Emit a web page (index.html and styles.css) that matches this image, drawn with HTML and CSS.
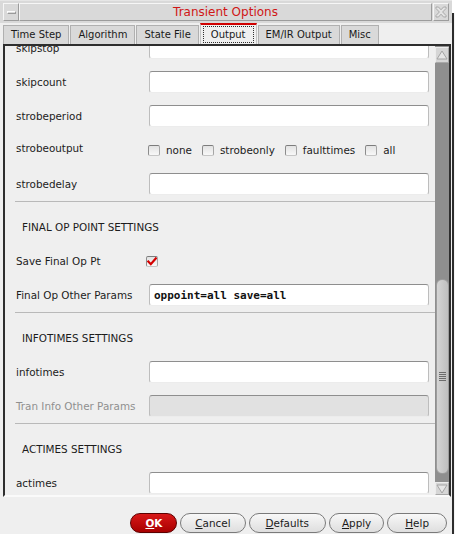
FILE: index.html
```html
<!DOCTYPE html>
<html>
<head>
<meta charset="utf-8">
<title>Transient Options</title>
<link rel="stylesheet" href="styles.css">
</head>
<body>
<div class="window">
  <div class="titlebar">
    <div class="tb-btn"><span class="dash"></span></div>
    <div class="title">Transient Options</div>
    <div class="tb-btn close">
      <svg width="12" height="12" viewBox="0 0 12 12"><polygon points="1,1 3.5,1 6,3.8 8.5,1 11,1 11,2.5 7.6,6 11,9.5 11,11 8.5,11 6,8.2 3.5,11 1,11 1,9.5 4.4,6 1,2.5" fill="#e4e4e4" stroke="#a9a9a9" stroke-width="1"/></svg>
    </div>
  </div>

  <div class="tabs">
    <div class="tab">Time Step</div>
    <div class="tab">Algorithm</div>
    <div class="tab">State File</div>
    <div class="tab active"><span class="focus">Output</span></div>
    <div class="tab">EM/IR Output</div>
    <div class="tab">Misc</div>
  </div>

  <div class="panel">
    <div class="viewport">
      <div class="content">
        <div class="row"><span class="label">skipstop</span><span class="field"></span></div>
        <div class="row"><span class="label">skipcount</span><span class="field"></span></div>
        <div class="row"><span class="label">strobeperiod</span><span class="field"></span></div>
        <div class="row row-top">
          <span class="label">strobeoutput</span>
          <div class="checks">
            <span class="check"><span class="cb"></span>none</span>
            <span class="check"><span class="cb"></span>strobeonly</span>
            <span class="check"><span class="cb"></span>faulttimes</span>
            <span class="check"><span class="cb"></span>all</span>
          </div>
        </div>
        <div class="row"><span class="label">strobedelay</span><span class="field"></span></div>

        <div class="section">
          <div class="heading">FINAL OP POINT SETTINGS</div>
          <div class="row"><span class="label">Save Final Op Pt</span>
            <span class="cb checked"><svg width="10" height="9" viewBox="0 0 10 9"><path d="M1.3 4.6 L3.8 7.2 L8.8 1.4" fill="none" stroke="#d40000" stroke-width="2.2" stroke-linecap="square"/></svg></span>
          </div>
          <div class="row"><span class="label">Final Op Other Params</span><span class="field mono">oppoint=all save=all</span></div>
        </div>

        <div class="section">
          <div class="heading">INFOTIMES SETTINGS</div>
          <div class="row"><span class="label">infotimes</span><span class="field"></span></div>
          <div class="row"><span class="label disabled">Tran Info Other Params</span><span class="field off"></span></div>
        </div>

        <div class="section">
          <div class="heading">ACTIMES SETTINGS</div>
          <div class="row"><span class="label">actimes</span><span class="field"></span></div>
        </div>
      </div>
    </div>
    <div class="scrollbar">
      <div class="arrow up"><svg width="12" height="10" viewBox="0 0 12 10"><polygon points="6,1 11,9 1,9" fill="#e6e6e6" stroke="#a4a4a4" stroke-width="1"/></svg></div>
      <div class="track">
        <div class="thumb" style="margin-top:216px;height:195px">
          <span class="grip"></span>
        </div>
      </div>
      <div class="arrow down"><svg width="12" height="10" viewBox="0 0 12 10"><polygon points="1,1 11,1 6,9" fill="#e6e6e6" stroke="#a4a4a4" stroke-width="1"/></svg></div>
    </div>
  </div>

  <div class="buttons">
    <button class="btn ok"><u>O</u>K</button>
    <button class="btn cancel"><u>C</u>ancel</button>
    <button class="btn wide"><u>D</u>efaults</button>
    <button class="btn compact"><u>A</u>pply</button>
    <button class="btn help"><u>H</u>elp</button>
  </div>
</div>
<div class="edge"></div>
</body>
</html>
```

FILE: styles.css
```css
* { box-sizing: border-box; }
html, body { margin: 0; padding: 0; }
body {
  width: 455px;
  height: 534px;
  overflow: hidden;
  background: #ffffff;
  display: flex;
  font-family: "DejaVu Sans", sans-serif;
  font-size: 10.4px;
  color: #1c1c1c;
}
.window {
  width: 452px;
  height: 534px;
  background: #efefef;
  display: flex;
  flex-direction: column;
}
.edge {
  width: 3px;
  margin-top: 13px;
  border-left: 2px solid #2c2c2c;
  background: #f4f4f4;
}

/* title bar */
.titlebar {
  height: 23px;
  background: #d9d9d9;
  border-top: 1px solid #e6e6e6;
  padding: 2px 3px 2px 3px;
  display: flex;
}
.tb-btn {
  width: 16px;
  border: 1px solid;
  border-color: #f6f6f6 #9c9c9c #9c9c9c #f6f6f6;
  display: flex;
  align-items: center;
  justify-content: center;
}
.tb-btn.close { margin-left: 1px; }
.dash {
  width: 9px;
  height: 3px;
  border-top: 1px solid #fdfdfd;
  border-bottom: 1px solid #9a9a9a;
  border-left: 1px solid #fdfdfd;
  border-right: 1px solid #9a9a9a;
}
.title {
  flex: 1;
  border: 1px solid;
  border-color: #f6f6f6 #9c9c9c #9c9c9c #f6f6f6;
  text-align: center;
  color: #d01616;
  font-size: 12px;
  line-height: 16px;
}

/* tabs */
.tabs {
  height: 21px;
  padding-left: 3px;
  display: flex;
  align-items: flex-end;
  background: #efefef;
}
.tab {
  height: 19px;
  padding: 0 7px;
  margin-right: 1px;
  background: #d9d9d9;
  border: 1px solid #b0b0b0;
  border-bottom: none;
  font-size: 10px;
  line-height: 18px;
  color: #1a1a1a;
}
.tab.active {
  height: 21px;
  padding: 1px 2px 0 2px;
  background: #efefef;
  border-top: 2px solid #d00000;
  border-left-color: #c4c4c4;
  border-right-color: #c4c4c4;
}
.focus {
  display: block;
  height: 17px;
  padding: 0 7px;
  border: 1px dotted #303030;
  line-height: 15px;
}

/* main panel */
.panel {
  height: 453px;
  width: 448px;
  margin-left: 3px;
  border-top: 2px solid #2e2e2e;
  border-left: 2px solid #2e2e2e;
  border-right: 2px solid #2e2e2e;
  border-bottom: 2px solid #fafafa;
  display: flex;
}
.viewport {
  flex: 1;
  overflow: hidden;
}
.content {
  margin-top: -15px;
}
.row {
  height: 34px;
  padding-left: 11px;
  padding-right: 6px;
  display: flex;
  align-items: center;
}
.label {
  width: 133px;
  flex: none;
  white-space: nowrap;
}
.row-top .label { margin-top: -4px; }
.label.disabled { color: #8f8f8f; }
.field {
  flex: 1;
  height: 22px;
  background: #ffffff;
  border: 1px solid;
  border-color: #8e8e8e #bdbdbd #ececec #bdbdbd;
  border-radius: 3px;
  display: flex;
  align-items: center;
  padding-left: 4px;
}
.field.off { background: #e1e1e1; }
.field.mono {
  font-family: "DejaVu Sans Mono", monospace;
  font-size: 11px;
  font-weight: bold;
  color: #111;
}

.checks {
  display: flex;
  align-items: center;
  margin-left: -1px;
}
.check {
  display: flex;
  align-items: center;
  gap: 6px;
  margin-right: 10px;
}
.cb {
  width: 12px;
  height: 11px;
  border: 1px solid;
  border-color: #7c7c7c #a6a6a6 #c6c6c6 #8c8c8c;
  border-radius: 2px;
  background: linear-gradient(#e2e2e2, #f8f8f8);
  display: flex;
  align-items: center;
  justify-content: center;
}
.cb.checked { margin-left: -3px; }

.section {
  margin-left: 10px;
  border-top: 1px solid #b9b9b9;
  padding-top: 8px;
}
.section .row { margin-left: -10px; }
.heading {
  height: 34px;
  padding-left: 7px;
  display: flex;
  align-items: center;
  white-space: nowrap;
}

/* scrollbar */
.scrollbar {
  width: 14px;
  display: flex;
  flex-direction: column;
  background: #8f8f8f;
}
.arrow {
  background: #d6d6d6;
  border: 1px solid;
  border-color: #ececec #a8a8a8 #a8a8a8 #ececec;
  display: flex;
  align-items: center;
  justify-content: center;
}
.arrow.up { height: 16px; margin-top: 1px; }
.arrow.down { height: 13px; }
.track {
  flex: 1;
  display: flex;
  flex-direction: column;
  padding: 0 0 0 1px;
}
.thumb {
  border-radius: 6px;
  border: 1px solid #9c9c9c;
  background: linear-gradient(to right, #d4d4d4, #bfbfbf);
  display: flex;
  align-items: center;
  justify-content: center;
}
.grip {
  width: 7px;
  height: 9px;
  background: repeating-linear-gradient(#6c6c6c 0 1px, transparent 1px 2px);
}

/* buttons */
.buttons {
  flex: 1;
  display: flex;
  justify-content: flex-end;
  align-items: flex-start;
  gap: 3px;
  padding: 16px 5px 0 0;
}
.btn {
  height: 20px;
  padding: 0 16px;
  border-radius: 10px;
  border: 1px solid #7a7a7a;
  background: linear-gradient(#f8f8f8, #dedede);
  font-family: "DejaVu Sans", sans-serif;
  font-size: 10.4px;
  color: #1a1a1a;
  line-height: 18px;
}
.btn.cancel { padding: 0 14px; }
.btn.wide { padding: 0 16px; }
.btn.compact { padding: 0 12px; }
.btn.help { padding: 0 17px; }
.btn.ok {
  padding: 0 14px;
  background: linear-gradient(#d81818, #a80000);
  border-color: #5c0000;
  color: #ffffff;
  font-weight: bold;
}
```
